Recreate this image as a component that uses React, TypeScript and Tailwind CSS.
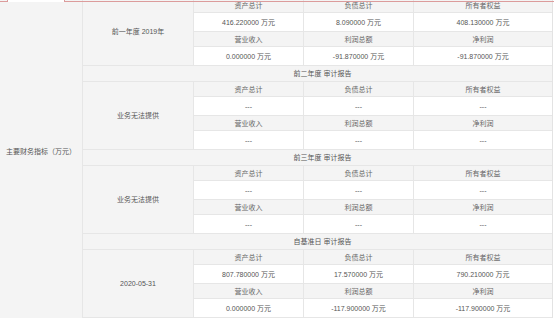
const blocks = [
  {
    title: '',
    label: '前一年度 2019年',
    values: ['416.220000 万元', '8.090000 万元', '408.130000 万元'],
    values2: ['0.000000 万元', '-91.870000 万元', '-91.870000 万元'],
  },
  {
    title: '前二年度 审计报告',
    label: '业务无法提供',
    values: ['---', '---', '---'],
    values2: ['---', '---', '---'],
  },
  {
    title: '前三年度 审计报告',
    label: '业务无法提供',
    values: ['---', '---', '---'],
    values2: ['---', '---', '---'],
  },
  {
    title: '自基准日 审计报告',
    label: '2020-05-31',
    values: ['807.780000 万元', '17.570000 万元', '790.210000 万元'],
    values2: ['0.000000 万元', '-117.900000 万元', '-117.900000 万元'],
  },
];

const head1 = ['资产总计', '负债总计', '所有者权益'];
const head2 = ['营业收入', '利润总额', '净利润'];

function Row({ cells, header }: { cells: string[]; header?: boolean }) {
  return (
    <div
      className={
        header
          ? 'grid grid-cols-[110px_110px_1fr] h-[15px] bg-[#f4f4f4] border-b border-[#e6e6e6] text-[#666]'
          : 'grid grid-cols-[110px_110px_1fr] h-[19px] bg-white border-b border-[#e6e6e6] text-[#555]'
      }
    >
      {cells.map((c, i) => (
        <div
          key={i}
          className={
            i < 2
              ? 'flex items-center justify-center border-r border-[#e6e6e6]'
              : 'flex items-center justify-center'
          }
        >
          {c}
        </div>
      ))}
    </div>
  );
}

export default function App() {
  return (
    <div
      className="w-[554px] h-[319px] overflow-hidden bg-white text-[7px] leading-none"
      style={{ fontFamily: '"Liberation Sans", "Noto Sans CJK SC", sans-serif' }}
    >
      {/* tab strip above the table */}
      <div className="relative z-10 flex h-[2px]">
        <div className="w-[7px] border-b border-[#dc9c9c]" />
        <div className="w-[58px] bg-white border-x border-[#dc9c9c]" />
        <div className="flex-1 border-b border-[#dc9c9c]" />
      </div>

      <div className="-mt-[4px] flex w-[553px] border-r border-[#e3e3e3]">
        <div className="w-[83px] shrink-0 bg-[#f4f4f4] border-r border-[#e6e6e6] flex items-center justify-center pb-[14px] text-[#555]">
          主要财务指标（万元）
        </div>
        <div className="flex-1 flex flex-col">
          {blocks.map((b, i) => (
            <div key={i} className="flex flex-col">
              {b.title && (
                <div className="h-[16px] bg-[#f4f4f4] border-b border-[#e6e6e6] flex items-center justify-center pl-[10px] text-[#555]">
                  {b.title}
                </div>
              )}
              <div className="flex">
                <div className="w-[111px] shrink-0 bg-[#f4f4f4] border-r border-b border-[#e6e6e6] flex items-center justify-center text-[#555]">
                  {b.label}
                </div>
                <div className="flex-1 flex flex-col">
                  <Row cells={head1} header />
                  <Row cells={b.values} />
                  <Row cells={head2} header />
                  <Row cells={b.values2} />
                </div>
              </div>
            </div>
          ))}
        </div>
      </div>
    </div>
  );
}
